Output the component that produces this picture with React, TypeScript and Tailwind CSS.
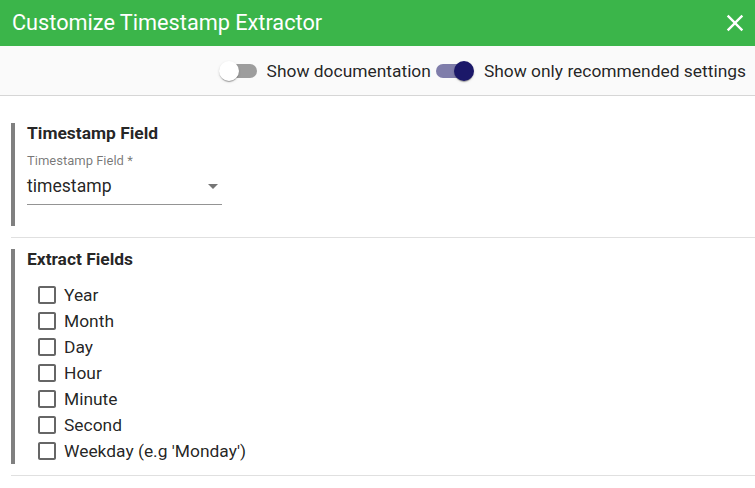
import React from "react";

function Switch({ checked }: { checked: boolean }) {
  return (
    <div className="relative w-[38px] h-[20px] shrink-0">
      {checked ? (
        <>
          <div className="absolute left-0 top-[3px] w-[34px] h-[14px] rounded-full bg-[#7f7daa]" />
          <div className="absolute left-[18px] top-0 w-[20px] h-[20px] rounded-full bg-[#1b1869] shadow-[0_2px_1px_-1px_rgba(0,0,0,0.2),0_1px_1px_0_rgba(0,0,0,0.14),0_1px_3px_0_rgba(0,0,0,0.12)]" />
        </>
      ) : (
        <>
          <div className="absolute left-[4px] top-[3px] w-[34px] h-[14px] rounded-full bg-[#9d9d9d]" />
          <div className="absolute left-0 top-0 w-[20px] h-[20px] rounded-full bg-white shadow-[0_2px_1px_-1px_rgba(0,0,0,0.2),0_1px_1px_0_rgba(0,0,0,0.14),0_1px_3px_0_rgba(0,0,0,0.12)]" />
        </>
      )}
    </div>
  );
}

function CheckRow({ label }: { label: string }) {
  return (
    <div className="flex items-center h-[26px]">
      <svg viewBox="0 0 24 24" className="w-6 h-6 shrink-0 fill-[#666666]">
        <path d="M19 5v14H5V5h14m0-2H5c-1.1 0-2 .9-2 2v14c0 1.1.9 2 2 2h14c1.1 0 2-.9 2-2V5c0-1.1-.9-2-2-2z" />
      </svg>
      <span className="ml-[5px] text-[17.4px] leading-[20px] text-[rgba(0,0,0,0.87)]">{label}</span>
    </div>
  );
}

export default function App() {
  return (
    <div className="w-[755px] h-[488px] bg-white overflow-hidden" style={{ fontFamily: "Roboto, 'Liberation Sans', sans-serif" }}>
      <div className="h-[46px] bg-[#3bb54a] flex items-center justify-between pl-[12px] pr-[6px]">
        <span className="text-white text-[21.7px] leading-[26px]">Customize Timestamp Extractor</span>
        <svg viewBox="0 0 24 24" className="w-[28px] h-[28px] fill-white">
          <path d="M19 6.41L17.59 5 12 10.59 6.41 5 5 6.41 10.59 12 5 17.59 6.41 19 12 13.41 17.59 19 19 17.59 13.41 12z" />
        </svg>
      </div>
      <div className="h-[50px] bg-[#fafafa] border-b border-[#d6d6d6] flex items-center justify-end pr-[9px]">
        <Switch checked={false} />
        <span className="ml-[10px] text-[17.4px] leading-[20px] text-[rgba(0,0,0,0.87)]">Show documentation</span>
        <div className="ml-[5px]">
          <Switch checked={true} />
        </div>
        <span className="ml-[10px] text-[17.4px] leading-[20px] text-[rgba(0,0,0,0.87)]">Show only recommended settings</span>
      </div>
      <div className="pt-[27px]">
        <div className="ml-[11px] border-l-4 border-[#808080] pl-[12px] pb-[21px]">
          <div className="text-[17.4px] leading-[20px] font-bold text-[rgba(0,0,0,0.87)]">Timestamp Field</div>
          <div className="w-[195px] mt-[11px]">
            <div className="text-[13px] leading-[14px] text-[rgba(0,0,0,0.54)]">Timestamp Field *</div>
            <div className="flex items-center justify-between pt-[6px] pb-[6px] border-b border-[#949494]">
              <span className="text-[17.6px] leading-[24px] text-[rgba(0,0,0,0.87)]">timestamp</span>
              <svg viewBox="0 0 10 5" className="w-[10px] h-[5px] mr-[4px] fill-[#757575]">
                <path d="M0 0h10L5 5z" />
              </svg>
            </div>
          </div>
        </div>
        <div className="ml-[11px] h-px bg-[#e0e0e0] my-[11px]" />
        <div className="ml-[11px] border-l-4 border-[#808080] pl-[12px]">
          <div className="text-[17.4px] leading-[20px] font-bold text-[rgba(0,0,0,0.87)]">Extract Fields</div>
          <div className="mt-[13px] ml-[8px] flex flex-col">
            {["Year", "Month", "Day", "Hour", "Minute", "Second", "Weekday (e.g 'Monday')"].map((l) => (
              <CheckRow key={l} label={l} />
            ))}
          </div>
        </div>
        <div className="ml-[11px] h-px bg-[#e0e0e0] mt-[11px]" />
      </div>
    </div>
  );
}
